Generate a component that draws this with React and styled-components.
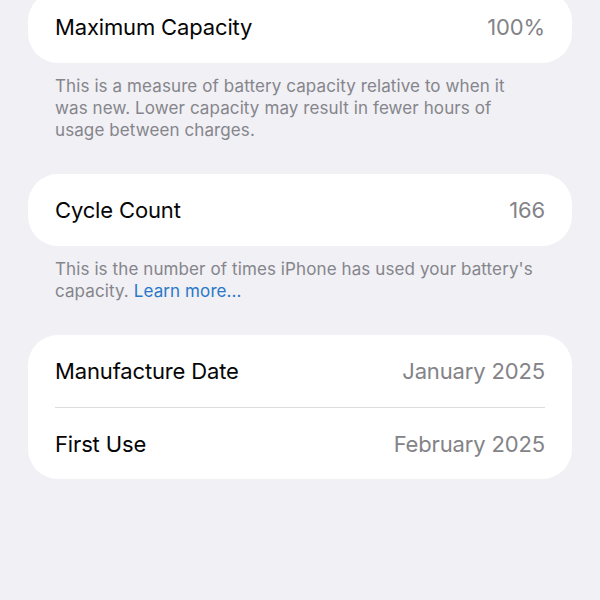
import React from 'react'
import styled, { createGlobalStyle } from 'styled-components'

const GlobalStyle = createGlobalStyle`
  html, body {
    margin: 0;
    padding: 0;
    background: #f0f0f5;
  }
  body {
    font-family: Inter, "Liberation Sans", sans-serif;
    -webkit-font-smoothing: antialiased;
  }
`

const sections = [
  {
    rows: [{ label: 'Maximum Capacity', value: '100%' }],
    note: 'This is a measure of battery capacity relative to when it was new. Lower capacity may result in fewer hours of usage between charges.',
  },
  {
    rows: [{ label: 'Cycle Count', value: '166' }],
    note: "This is the number of times iPhone has used your battery's capacity. ",
    link: 'Learn more...',
  },
  {
    rows: [
      { label: 'Manufacture Date', value: 'January 2025' },
      { label: 'First Use', value: 'February 2025' },
    ],
  },
]

export default function App() {
  return (
    <>
      <GlobalStyle />
      <Page>
        {sections.map((section, i) => (
          <Section key={i}>
            <Card>
              {section.rows.map((row, j) => (
                <Row key={row.label} $divided={j > 0}>
                  <Label>{row.label}</Label>
                  <Value>{row.value}</Value>
                </Row>
              ))}
            </Card>
            {section.note && (
              <Note>
                {section.note}
                {section.link && <Link>{section.link}</Link>}
              </Note>
            )}
          </Section>
        ))}
      </Page>
    </>
  )
}

const Page = styled.div`
  width: 600px;
  height: 600px;
  box-sizing: border-box;
  padding: 0 28px;
  margin-top: -9px;
  display: flex;
  flex-direction: column;
  gap: 33px;
  overflow: hidden;
`

const Section = styled.div`
  display: flex;
  flex-direction: column;
`

const Card = styled.div`
  background: #ffffff;
  border-radius: 30px;
  padding: 0 27px;
`

const Row = styled.div`
  height: 72px;
  display: flex;
  align-items: center;
  justify-content: space-between;
  border-top: ${(props) => (props.$divided ? '1px solid #dcdce0' : 'none')};
  box-sizing: border-box;
`

const Label = styled.span`
  font-size: 22px;
  color: #050505;
  letter-spacing: -0.15px;
`

const Value = styled.span`
  font-size: 22px;
  color: #838388;
  letter-spacing: -0.15px;
`

const Note = styled.p`
  margin: 0;
  padding: 12px 32px 0 27px;
  font-size: 17px;
  line-height: 22px;
  color: #85858b;
  letter-spacing: 0.1px;
`

const Link = styled.span`
  color: #2a78c8;
`
